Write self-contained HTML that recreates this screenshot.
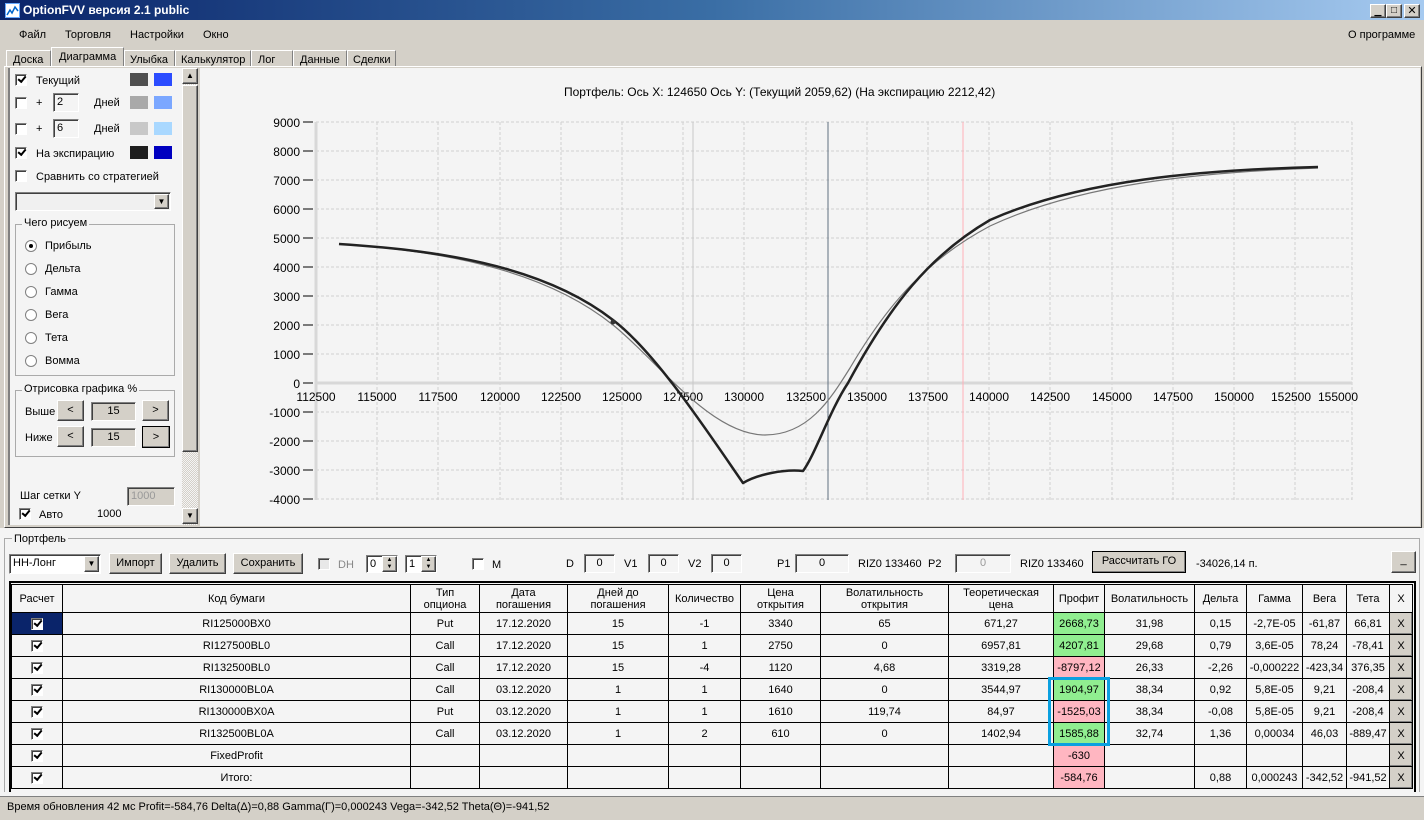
<!DOCTYPE html>
<html><head><meta charset="utf-8">
<style>
*{box-sizing:border-box;margin:0;padding:0}
body{width:1424px;height:820px;overflow:hidden;background:#d4d0c8;font-family:"Liberation Sans","DejaVu Sans",sans-serif;font-size:11px;color:#000;position:relative}
.a{position:absolute}
.t{position:absolute;white-space:nowrap}
.cb{position:absolute;width:12px;height:12px;background:#fff;border:1px solid;border-color:#808080 #fff #fff #808080;box-shadow:inset 1px 1px #404040}
.cb.on::after{content:"";position:absolute;left:2px;top:1px;width:6px;height:3px;border-left:2px solid #000;border-bottom:2px solid #000;transform:rotate(-50deg);transform-origin:center}
.cb.dis{background:#e8e8e8}
.in{position:absolute;background:#f4f4f4;border:1px solid;border-color:#808080 #fff #fff #808080;box-shadow:inset 1px 1px #404040;font-size:11px;padding-left:3px;line-height:16px}
.btn{position:absolute;background:#d4d0c8;border:1px solid;border-color:#fff #404040 #404040 #fff;box-shadow:inset -1px -1px #808080;text-align:center;font-size:11px}
.rad{position:absolute;width:12px;height:12px;border-radius:50%;background:#fff;border:1px solid #808080}
.rad.on::after{content:"";position:absolute;left:3px;top:3px;width:4px;height:4px;border-radius:50%;background:#000}
.grp{position:absolute;border:1px solid #aaa}
.grp span{position:absolute;top:-8px;left:6px;background:#f4f4f4;padding:0 2px}
table{border-collapse:collapse;table-layout:fixed;position:absolute;left:11px;top:584px;width:1401px;background:#f4f4f4}
td{border:1px solid #000;text-align:center;height:22px;font-size:11px;white-space:nowrap;overflow:hidden;padding:0}
tr.h td{height:28px;line-height:12px;background:#f4f4f4}
.g{background:#90ee90}.r{background:#ffb6c1}
.x{background:#d4d0c8;border-top:1px solid #fff;border-left:1px solid #fff;box-shadow:inset -1px -1px #808080}
</style></head><body>
<div class="a" style="left:0;top:0;width:1424px;height:20px;background:linear-gradient(90deg,#0a246a,#3a6ea5 50%,#a6caf0)"></div>
<div class="a" style="left:5px;top:3px;width:15px;height:15px;background:#fff;border:1px solid #6af"><svg width="13" height="13"><path d="M1 11 L4 6 L6 9 L9 3 L12 7" stroke="#06c" stroke-width="1.5" fill="none"/></svg></div>
<div class="t" style="left:23px;top:3px;color:#fff;font-weight:bold;font-size:12px">OptionFVV версия 2.1 public</div>
<div class="btn" style="left:1370px;top:4px;width:16px;height:14px;font-size:9px;line-height:12px">▁</div>
<div class="btn" style="left:1386px;top:4px;width:16px;height:14px;font-size:10px;line-height:12px">□</div>
<div class="btn" style="left:1404px;top:4px;width:16px;height:14px;font-size:11px;line-height:12px;font-weight:bold">✕</div>
<div class="a" style="left:0;top:20px;width:1424px;height:27px;background:#d4d0c8"></div>
<div class="t" style="left:19px;top:29px">Файл</div>
<div class="t" style="left:65px;top:29px">Торговля</div>
<div class="t" style="left:130px;top:29px">Настройки</div>
<div class="t" style="left:203px;top:29px">Окно</div>
<div class="t" style="left:1348px;top:29px">О программе</div>
<div class="a" style="left:6px;top:50px;width:45px;height:17px;border:1px solid #fff;border-bottom:none;border-right-color:#808080;padding:3px 0 0 6px">Доска</div>
<div class="a" style="left:51px;top:47px;width:73px;height:20px;border:1px solid #fff;border-bottom:none;border-right-color:#808080;background:#d4d0c8;padding:3px 0 0 7px">Диаграмма</div>
<div class="a" style="left:124px;top:50px;width:51px;height:17px;border:1px solid #fff;border-bottom:none;border-right-color:#808080;padding:3px 0 0 5px">Улыбка</div>
<div class="a" style="left:175px;top:50px;width:76px;height:17px;border:1px solid #fff;border-bottom:none;border-right-color:#808080;padding:3px 0 0 5px">Калькулятор</div>
<div class="a" style="left:251px;top:50px;width:42px;height:17px;border:1px solid #fff;border-bottom:none;border-right-color:#808080;padding:3px 0 0 6px">Лог</div>
<div class="a" style="left:293px;top:50px;width:54px;height:17px;border:1px solid #fff;border-bottom:none;border-right-color:#808080;padding:3px 0 0 6px">Данные</div>
<div class="a" style="left:347px;top:50px;width:49px;height:17px;border:1px solid #fff;border-bottom:none;border-right-color:#808080;padding:3px 0 0 5px">Сделки</div>
<div class="a" style="left:4px;top:66px;width:1418px;height:462px;border:1px solid;border-color:#fff #404040 #404040 #fff"></div>
<div class="a" style="left:8px;top:68px;width:190px;height:457px;background:#f4f4f4;border-left:2px solid #808080"></div>
<div class="cb on" style="left:15px;top:74px"></div><div class="t" style="left:36px;top:75px">Текущий</div>
<div class="a" style="left:130px;top:73px;width:18px;height:13px;background:#4f4f4f"></div><div class="a" style="left:154px;top:73px;width:18px;height:13px;background:#2b4cff"></div>
<div class="cb" style="left:15px;top:97px"></div><div class="t" style="left:36px;top:97px">+</div><div class="in" style="left:53px;top:93px;width:26px;height:19px">2</div><div class="t" style="left:94px;top:97px">Дней</div>
<div class="a" style="left:130px;top:96px;width:18px;height:13px;background:#a9a9a9"></div><div class="a" style="left:154px;top:96px;width:18px;height:13px;background:#7ba7ff"></div>
<div class="cb" style="left:15px;top:123px"></div><div class="t" style="left:36px;top:123px">+</div><div class="in" style="left:53px;top:119px;width:26px;height:19px">6</div><div class="t" style="left:94px;top:123px">Дней</div>
<div class="a" style="left:130px;top:122px;width:18px;height:13px;background:#c8c8c8"></div><div class="a" style="left:154px;top:122px;width:18px;height:13px;background:#a9d8ff"></div>
<div class="cb on" style="left:15px;top:147px"></div><div class="t" style="left:36px;top:148px">На экспирацию</div>
<div class="a" style="left:130px;top:146px;width:18px;height:13px;background:#1e1e1e"></div><div class="a" style="left:154px;top:146px;width:18px;height:13px;background:#0000c0"></div>
<div class="cb" style="left:15px;top:170px"></div><div class="t" style="left:36px;top:171px">Сравнить со стратегией</div>
<div class="in" style="left:15px;top:192px;width:156px;height:19px;background:#f0f0f0"></div>
<div class="btn" style="left:154px;top:194px;width:15px;height:15px;font-size:8px;line-height:13px">▼</div>
<div class="grp" style="left:15px;top:224px;width:160px;height:152px"><span>Чего рисуем</span></div>
<div class="rad on" style="left:25px;top:240px"></div><div class="t" style="left:45px;top:240px">Прибыль</div>
<div class="rad" style="left:25px;top:263px"></div><div class="t" style="left:45px;top:263px">Дельта</div>
<div class="rad" style="left:25px;top:286px"></div><div class="t" style="left:45px;top:286px">Гамма</div>
<div class="rad" style="left:25px;top:309px"></div><div class="t" style="left:45px;top:309px">Вега</div>
<div class="rad" style="left:25px;top:332px"></div><div class="t" style="left:45px;top:332px">Тета</div>
<div class="rad" style="left:25px;top:355px"></div><div class="t" style="left:45px;top:355px">Вомма</div>
<div class="grp" style="left:15px;top:390px;width:160px;height:67px"><span>Отрисовка графика %</span></div>
<div class="t" style="left:25px;top:406px">Выше</div>
<div class="btn" style="left:57px;top:400px;width:27px;height:21px;line-height:19px">&lt;</div>
<div class="in" style="left:91px;top:402px;width:45px;height:19px;background:#d4d0c8;text-align:center;padding:0">15</div>
<div class="btn" style="left:142px;top:400px;width:27px;height:21px;line-height:19px">&gt;</div>
<div class="t" style="left:25px;top:432px">Ниже</div>
<div class="btn" style="left:57px;top:426px;width:27px;height:21px;line-height:19px">&lt;</div>
<div class="in" style="left:91px;top:428px;width:45px;height:19px;background:#d4d0c8;text-align:center;padding:0">15</div>
<div class="btn" style="left:142px;top:426px;width:28px;height:22px;line-height:20px;border:1px solid #000">&gt;</div>
<div class="t" style="left:20px;top:490px">Шаг сетки Y</div>
<div class="in" style="left:127px;top:487px;width:48px;height:19px;background:#d4d0c8;color:#999">1000</div>
<div class="cb on" style="left:19px;top:508px"></div><div class="t" style="left:39px;top:509px">Авто</div><div class="t" style="left:97px;top:508px">1000</div>
<div class="a" style="left:182px;top:68px;width:16px;height:457px;background:repeating-conic-gradient(#d4d0c8 0 25%,#f4f4f4 0 50%) 0 0/2px 2px"></div>
<div class="btn" style="left:182px;top:68px;width:16px;height:16px;font-size:8px;line-height:14px">▲</div>
<div class="btn" style="left:182px;top:85px;width:16px;height:367px"></div>
<div class="btn" style="left:182px;top:508px;width:16px;height:16px;font-size:8px;line-height:14px">▼</div>
<svg class="a" style="left:200px;top:68px" width="1220" height="458" viewBox="200 68 1220 458">
<rect x="200" y="68" width="1220" height="458" fill="#f4f4f4"/>
<g stroke="#d0d0d0" stroke-dasharray="3,2" stroke-width="1">
<path d="M316 122H1352M316 151H1352M316 180H1352M316 209H1352M316 238H1352M316 267H1352M316 296H1352M316 325H1352M316 354H1352M316 412H1352M316 441H1352M316 470H1352M316 499H1352"/>
<path d="M377 122V500M438 122V500M500 122V500M561 122V500M622 122V500M683 122V500M744 122V500M806 122V500M867 122V500M928 122V500M989 122V500M1050 122V500M1112 122V500M1173 122V500M1234 122V500M1295 122V500M1352 122V500"/>
</g>
<path d="M316 122V500M316 383H1352" stroke="#d8d8d8" stroke-width="3"/>
<path d="M693 122V500" stroke="#c8c8c8"/>
<path d="M828 122V500" stroke="#607080"/>
<path d="M963 122V500" stroke="#ffb0b8"/>
<g stroke="#000"><path d="M303 122H313M303 151H313M303 180H313M303 209H313M303 238H313M303 267H313M303 296H313M303 325H313M303 354H313M303 383H313M303 412H313M303 441H313M303 470H313M303 499H313"/></g>
<g font-family="Liberation Sans,sans-serif" font-size="12" text-anchor="end" fill="#000">
<text x="300" y="127">9000</text><text x="300" y="156">8000</text><text x="300" y="185">7000</text><text x="300" y="214">6000</text><text x="300" y="243">5000</text><text x="300" y="272">4000</text><text x="300" y="301">3000</text><text x="300" y="330">2000</text><text x="300" y="359">1000</text><text x="300" y="388">0</text><text x="300" y="417">-1000</text><text x="300" y="446">-2000</text><text x="300" y="475">-3000</text><text x="300" y="504">-4000</text>
</g>
<g font-family="Liberation Sans,sans-serif" font-size="12" text-anchor="middle" fill="#000">
<text x="316" y="401">112500</text><text x="377" y="401">115000</text><text x="438" y="401">117500</text><text x="500" y="401">120000</text><text x="561" y="401">122500</text><text x="622" y="401">125000</text><text x="683" y="401">127500</text><text x="744" y="401">130000</text><text x="806" y="401">132500</text><text x="867" y="401">135000</text><text x="928" y="401">137500</text><text x="989" y="401">140000</text><text x="1050" y="401">142500</text><text x="1112" y="401">145000</text><text x="1173" y="401">147500</text><text x="1234" y="401">150000</text><text x="1291" y="401">152500</text><text x="1338" y="401">155000</text>
</g>
<text x="564" y="96" font-family="Liberation Sans,sans-serif" font-size="12">Портфель: Ось X: 124650 Ось Y:  (Текущий 2059,62)  (На экспирацию 2212,42)</text>
<path fill="none" stroke="#777" stroke-width="1.2" d="M339,244 C430,250 540,266 613,325 C655,358 710,435 765,435 C808,435 830,400 850,368 C890,300 930,258 990,226 C1080,184 1200,172 1318,168"/>
<path fill="none" stroke="#222" stroke-width="2.5" stroke-linejoin="round" d="M339,244 C430,250 540,263 613,320 C655,352 705,428 743,483 C758,474 785,469 803,471 C815,455 830,410 848,383 C890,305 930,255 990,220 C1080,180 1200,170 1318,167"/>
<circle cx="613" cy="322" r="2.5" fill="#333"/>
</svg>
<div class="a" style="left:0;top:528px;width:1424px;height:268px;background:#f4f4f4"></div>
<div class="a" style="left:4px;top:538px;width:1416px;height:254px;border:1px solid #aaa;border-bottom:none"></div>
<div class="t" style="left:12px;top:533px;background:#f4f4f4;padding:0 2px">Портфель</div>
<div class="in" style="left:9px;top:554px;width:92px;height:20px;background:#fff">НН-Лонг</div>
<div class="btn" style="left:84px;top:556px;width:15px;height:16px;font-size:8px;line-height:14px">▼</div>
<div class="btn" style="left:109px;top:553px;width:53px;height:21px;line-height:19px">Импорт</div>
<div class="btn" style="left:169px;top:553px;width:57px;height:21px;line-height:19px">Удалить</div>
<div class="btn" style="left:233px;top:553px;width:70px;height:21px;line-height:19px">Сохранить</div>
<div class="cb dis" style="left:318px;top:558px"></div><div class="t" style="left:338px;top:559px;color:#888">DH</div>
<div class="in" style="left:366px;top:555px;width:32px;height:18px;background:#fff">0</div><div class="btn" style="left:382px;top:556px;width:15px;height:16px;font-size:6px;line-height:7px">▲<br>▼</div>
<div class="in" style="left:405px;top:555px;width:32px;height:18px;background:#fff">1</div><div class="btn" style="left:421px;top:556px;width:15px;height:16px;font-size:6px;line-height:7px">▲<br>▼</div>
<div class="cb" style="left:472px;top:558px"></div><div class="t" style="left:492px;top:559px">M</div>
<div class="t" style="left:566px;top:558px">D</div><div class="in" style="left:584px;top:554px;width:31px;height:19px;text-align:center;padding:0">0</div>
<div class="t" style="left:624px;top:558px">V1</div><div class="in" style="left:648px;top:554px;width:31px;height:19px;text-align:center;padding:0">0</div>
<div class="t" style="left:688px;top:558px">V2</div><div class="in" style="left:711px;top:554px;width:31px;height:19px;text-align:center;padding:0">0</div>
<div class="t" style="left:777px;top:558px">P1</div><div class="in" style="left:795px;top:554px;width:54px;height:19px;text-align:center;padding:0">0</div>
<div class="t" style="left:858px;top:558px">RIZ0 133460</div><div class="t" style="left:928px;top:558px">P2</div>
<div class="in" style="left:955px;top:554px;width:56px;height:19px;text-align:center;padding:0;color:#999">0</div>
<div class="t" style="left:1020px;top:558px">RIZ0 133460</div>
<div class="btn" style="left:1092px;top:551px;width:94px;height:22px;line-height:19px;border:1px solid #000">Рассчитать ГО</div>
<div class="t" style="left:1196px;top:558px">-34026,14 п.</div>
<div class="btn" style="left:1391px;top:551px;width:25px;height:22px;line-height:16px">_</div>
<div class="a" style="left:9px;top:581px;width:1407px;height:211px;border:2px solid #000;border-bottom:none"></div>
<table>
<colgroup><col style="width:51px"><col style="width:348px"><col style="width:69px"><col style="width:88px"><col style="width:101px"><col style="width:72px"><col style="width:80px"><col style="width:128px"><col style="width:105px"><col style="width:51px"><col style="width:90px"><col style="width:52px"><col style="width:56px"><col style="width:44px"><col style="width:43px"><col style="width:23px"></colgroup>
<tr class="h"><td>Расчет</td><td>Код бумаги</td><td>Тип<br>опциона</td><td>Дата<br>погашения</td><td>Дней до<br>погашения</td><td>Количество</td><td>Цена<br>открытия</td><td>Волатильность<br>открытия</td><td>Теоретическая<br>цена</td><td>Профит</td><td>Волатильность</td><td>Дельта</td><td>Гамма</td><td>Вега</td><td>Тета</td><td>X</td></tr>
<tr><td style="background:#0a246a"><span class="cb on" style="position:relative;display:inline-block;top:2px"></span></td><td>RI125000BX0</td><td>Put</td><td>17.12.2020</td><td>15</td><td>-1</td><td>3340</td><td>65</td><td>671,27</td><td class="g">2668,73</td><td>31,98</td><td>0,15</td><td>-2,7E-05</td><td>-61,87</td><td>66,81</td><td class="x">X</td></tr>
<tr><td><span class="cb on" style="position:relative;display:inline-block;top:2px"></span></td><td>RI127500BL0</td><td>Call</td><td>17.12.2020</td><td>15</td><td>1</td><td>2750</td><td>0</td><td>6957,81</td><td class="g">4207,81</td><td>29,68</td><td>0,79</td><td>3,6E-05</td><td>78,24</td><td>-78,41</td><td class="x">X</td></tr>
<tr><td><span class="cb on" style="position:relative;display:inline-block;top:2px"></span></td><td>RI132500BL0</td><td>Call</td><td>17.12.2020</td><td>15</td><td>-4</td><td>1120</td><td>4,68</td><td>3319,28</td><td class="r">-8797,12</td><td>26,33</td><td>-2,26</td><td>-0,000222</td><td>-423,34</td><td>376,35</td><td class="x">X</td></tr>
<tr><td><span class="cb on" style="position:relative;display:inline-block;top:2px"></span></td><td>RI130000BL0A</td><td>Call</td><td>03.12.2020</td><td>1</td><td>1</td><td>1640</td><td>0</td><td>3544,97</td><td class="g">1904,97</td><td>38,34</td><td>0,92</td><td>5,8E-05</td><td>9,21</td><td>-208,4</td><td class="x">X</td></tr>
<tr><td><span class="cb on" style="position:relative;display:inline-block;top:2px"></span></td><td>RI130000BX0A</td><td>Put</td><td>03.12.2020</td><td>1</td><td>1</td><td>1610</td><td>119,74</td><td>84,97</td><td class="r">-1525,03</td><td>38,34</td><td>-0,08</td><td>5,8E-05</td><td>9,21</td><td>-208,4</td><td class="x">X</td></tr>
<tr><td><span class="cb on" style="position:relative;display:inline-block;top:2px"></span></td><td>RI132500BL0A</td><td>Call</td><td>03.12.2020</td><td>1</td><td>2</td><td>610</td><td>0</td><td>1402,94</td><td class="g">1585,88</td><td>32,74</td><td>1,36</td><td>0,00034</td><td>46,03</td><td>-889,47</td><td class="x">X</td></tr>
<tr><td><span class="cb on" style="position:relative;display:inline-block;top:2px"></span></td><td>FixedProfit</td><td></td><td></td><td></td><td></td><td></td><td></td><td></td><td class="r">-630</td><td></td><td></td><td></td><td></td><td></td><td class="x">X</td></tr>
<tr><td><span class="cb on" style="position:relative;display:inline-block;top:2px"></span></td><td>Итого:</td><td></td><td></td><td></td><td></td><td></td><td></td><td></td><td class="r">-584,76</td><td></td><td>0,88</td><td>0,000243</td><td>-342,52</td><td>-941,52</td><td class="x">X</td></tr>
</table>
<div class="a" style="left:1048px;top:677px;width:62px;height:69px;border:3px solid #0aa0e0"></div>
<div class="a" style="left:0;top:796px;width:1424px;height:24px;background:#d4d0c8;border-top:1px solid #808080"></div>
<div class="t" style="left:7px;top:801px">Время обновления 42 мс  Profit=-584,76 Delta(Δ)=0,88 Gamma(Γ)=0,000243 Vega=-342,52 Theta(Θ)=-941,52</div>
</body></html>
